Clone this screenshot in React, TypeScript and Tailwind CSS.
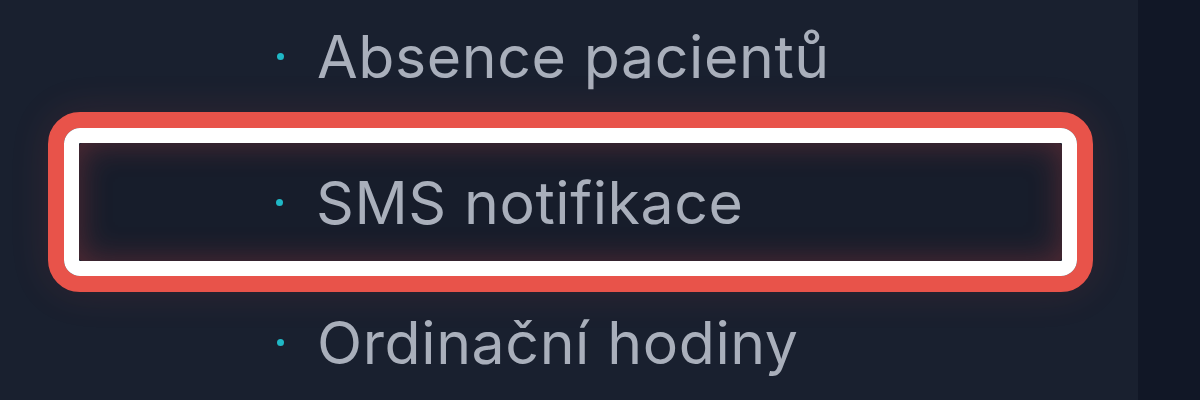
const items = ['Absence pacientů', 'SMS notifikace', 'Ordinační hodiny'];

function Item({ label }: { label: string }) {
  return (
    <div className="flex items-center">
      <span className="h-[7px] w-[7px] rounded-full bg-[#1fb8c6]" />
      <span className="ml-[33px] text-[59px] leading-none tracking-[0.6px] text-[#a9afbb]">
        {label}
      </span>
    </div>
  );
}

export default function App() {
  return (
    <div
      className="flex h-[400px] w-[1200px] overflow-hidden bg-[#19202f]"
      style={{ fontFamily: 'Inter, "Noto Sans", sans-serif' }}
    >
      <div className="flex w-[1138px] flex-col pl-[48px]">
        {/* plain row */}
        <div className="flex h-[112px] items-center pl-[229px]">
          <Item label={items[0]} />
        </div>

        {/* highlighted row */}
        <div className="h-[180px] w-[1045px] rounded-[32px] border-[16px] border-[#e8534a] shadow-[0_0_40px_rgba(232,83,74,0.12)]">
          <div className="h-full w-full rounded-[16px] border-[15px] border-white">
            <div className="flex h-full w-full items-center rounded-[4px] bg-[#171d2b] pl-[197px] shadow-[inset_0_0_32px_rgba(220,70,70,0.32)]">
              <Item label={items[1]} />
            </div>
          </div>
        </div>

        {/* plain row */}
        <div className="flex h-[108px] items-center pl-[229px] pb-[8px]">
          <Item label={items[2]} />
        </div>
      </div>
      <div className="flex-1 bg-[#111726]" />
    </div>
  );
}
